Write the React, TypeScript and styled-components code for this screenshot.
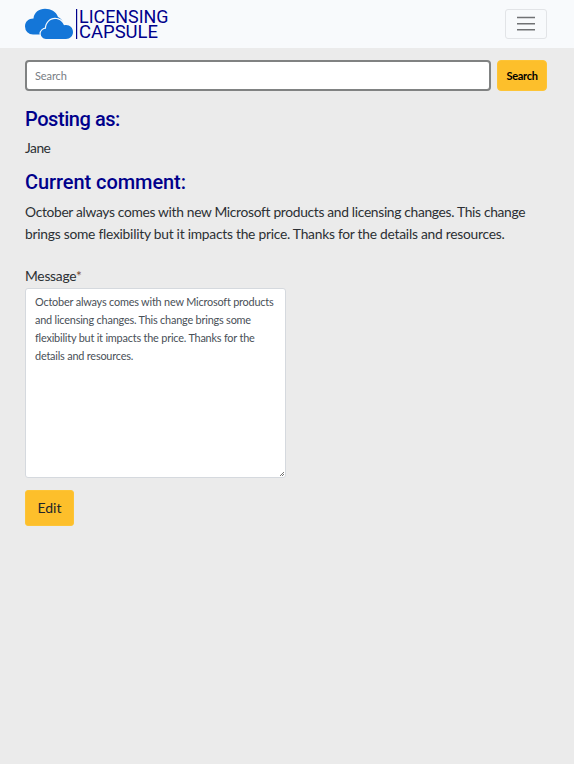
import React from "react";
import styled, { createGlobalStyle } from "styled-components";

const GlobalStyle = createGlobalStyle`
  * { box-sizing: border-box; }
  body {
    margin: 0;
    background: #ebebeb;
    color: #2c3034;
    font: 13.8px/22px Lato, "Open Sans", sans-serif;
  }
`;

const Navbar = styled.nav`
  display: flex;
  align-items: center;
  justify-content: space-between;
  height: 48px;
  padding: 0 27px 0 25px;
  background: #f8fafc;
`;

const Logo = styled.svg`
  display: block;
  width: 146px;
  height: 48px;
`;

const LogoText = styled.text`
  font-family: Roboto, sans-serif;
  font-size: 18px;
  fill: #00008b;
`;

const Toggler = styled.button`
  display: flex;
  align-items: center;
  justify-content: center;
  width: 42px;
  height: 30px;
  padding: 0;
  border: 1px solid #e2e4e7;
  border-radius: 3px;
  background: transparent;
`;

const Page = styled.main`
  padding: 12px 27px 0 25px;
`;

const SearchBar = styled.form`
  display: flex;
  gap: 6px;
  height: 31px;
`;

const SearchInput = styled.input`
  flex: 1;
  min-width: 0;
  height: 31px;
  padding: 0 8px 1px;
  border: 2px solid #808282;
  border-radius: 4px;
  background: #fff;
  font: 11px Lato, sans-serif;
  letter-spacing: -0.1px;
  &::placeholder { color: #777d83; opacity: 1; }
`;

const SearchButton = styled.button`
  width: 50px;
  height: 31px;
  padding: 0 0 1px;
  border: 1px solid #fdc436;
  border-radius: 4px;
  background: #fdbf2b;
  color: #000;
  font: bold 11px Lato, sans-serif;
  letter-spacing: -0.3px;
`;

const Heading = styled.h2<{ $top: number; $spacing: number }>`
  margin: ${(p) => p.$top}px 0 0;
  color: #00008b;
  font: 500 20px/24px Roboto, sans-serif;
  letter-spacing: ${(p) => p.$spacing}px;
`;

const Text = styled.p<{ $top: number }>`
  margin: ${(p) => p.$top}px 0 0;
`;

const Line = styled.span<{ $spacing: number }>`
  display: block;
  white-space: nowrap;
  letter-spacing: ${(p) => p.$spacing}px;
`;

const Label = styled.label`
  display: block;
  margin-top: 20px;
  height: 23px;
  letter-spacing: -0.25px;
`;

const Required = styled.span`
  color: #7a4a35;
`;

const Message = styled.textarea`
  display: block;
  width: 261px;
  height: 190px;
  padding: 4px 9px;
  border: 1px solid #d5d9de;
  border-radius: 3px;
  background: #fff;
  color: #495057;
  font: 10.9px/18px Lato, sans-serif;
  letter-spacing: -0.2px;
  white-space: pre;
  overflow: hidden;
  resize: both;
  &::-webkit-resizer {
    background:
      linear-gradient(135deg, transparent 50%, #777 50%, #777 62%, transparent 62%, transparent 75%, #777 75%, #777 87%, transparent 87%)
      right 1px bottom 1px / 5px 5px no-repeat;
  }
`;

const EditButton = styled.button`
  width: 49px;
  height: 36px;
  margin-top: 12px;
  padding: 0 0 2px;
  border: 1px solid #fdc436;
  border-radius: 3px;
  background: #fdbf2b;
  color: #212529;
  font: 14px Lato, sans-serif;
`;

const message = `October always comes with new Microsoft products
and licensing changes. This change brings some
flexibility but it impacts the price. Thanks for the
details and resources.`;

export default function App() {
  return (
    <>
      <GlobalStyle />
      <Navbar>
        <Logo viewBox="0 0 146 48" aria-label="Licensing Capsule">
          <path
            d="M8 34.5A8 8 0 0 1 0 26.5C0 21.5 3.5 18.5 8.5 18.5C9 12.5 14 8.8 20 8.8C26 8.8 31 11.5 33 17C37 19 39 22 38.5 27C38 32 35 34.5 31 34.5Z"
            fill="#1476d8"
          />
          <path
            d="M21 39C18 39 15.7 36.5 15.7 33.8C15.7 31 18 28.8 21 28.8C21 23 25 19 30 19C34.5 19 37.5 21.5 39 25.3C44 24 48 27.5 48 32C48 36 45 39 41 39Z"
            fill="#1476d8"
            stroke="#f8fafc"
            strokeWidth="2.4"
            paintOrder="stroke"
          />
          <rect x="51" y="9" width="1.2" height="30" fill="#00008b" />
          <LogoText x="54" y="22.7" textLength="89.5" lengthAdjust="spacingAndGlyphs">LICENSING</LogoText>
          <LogoText x="54" y="37.8" textLength="79" lengthAdjust="spacingAndGlyphs">CAPSULE</LogoText>
        </Logo>
        <Toggler aria-label="Toggle navigation">
          <svg width="22" height="22" viewBox="0 0 22 22" fill="none" stroke="#707274" strokeWidth="1.4">
            <path d="M2 4.5h18M2 10.7h18M2 16.8h18" />
          </svg>
        </Toggler>
      </Navbar>
      <Page>
        <SearchBar>
          <SearchInput placeholder="Search" />
          <SearchButton type="button">Search</SearchButton>
        </SearchBar>
        <Heading $top={16} $spacing={-0.45}>Posting as:</Heading>
        <Text $top={6}><Line $spacing={-0.5}>Jane</Line></Text>
        <Heading $top={11} $spacing={-0.07}>Current comment:</Heading>
        <Text $top={7}>
          <Line $spacing={-0.32}>October always comes with new Microsoft products and licensing changes. This change</Line>
          <Line $spacing={-0.25}>brings some flexibility but it impacts the price. Thanks for the details and resources.</Line>
        </Text>
        <Label htmlFor="message">Message<Required>*</Required></Label>
        <Message id="message" defaultValue={message} />
        <EditButton>Edit</EditButton>
      </Page>
    </>
  );
}
